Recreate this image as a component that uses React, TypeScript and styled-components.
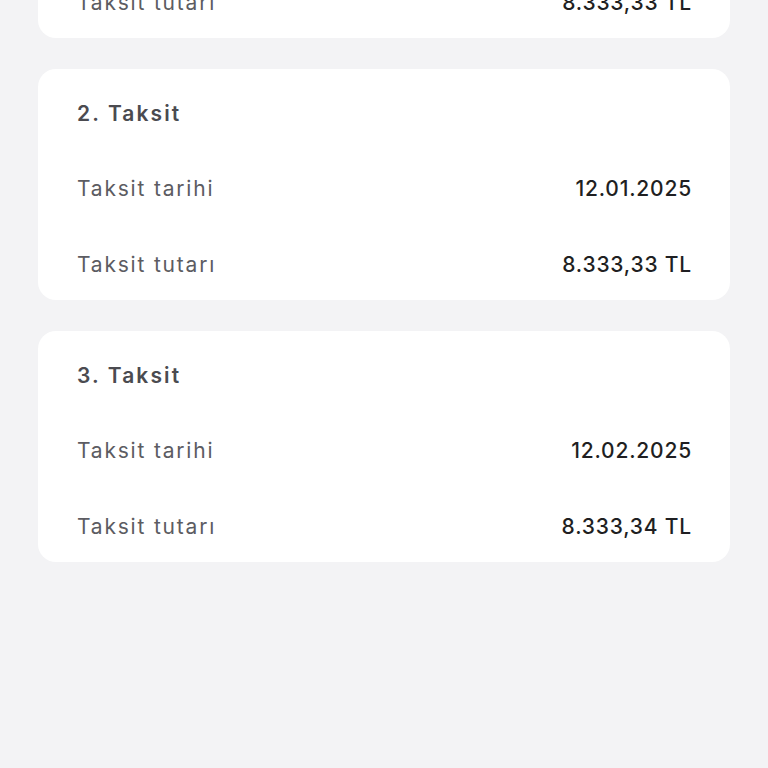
import React from "react";
import styled, { createGlobalStyle } from "styled-components";

const Global = createGlobalStyle`
  html, body { margin: 0; padding: 0; background: #f3f3f5; }
  body { font-family: "Inter", "Noto Sans", sans-serif; -webkit-font-smoothing: antialiased; }
`;

const Page = styled.div`
  width: 768px;
  height: 768px;
  overflow: hidden;
  background: #f3f3f5;
`;

const List = styled.div`
  display: flex;
  flex-direction: column;
  gap: 31px;
  padding: 0 38px;
  margin-top: -193px;
`;

const Card = styled.section`
  background: #ffffff;
  border-radius: 18px;
  height: 231px;
  box-sizing: border-box;
  padding: 7px 39px 0;
  display: grid;
  grid-template-rows: 74px 76px 74px;
  align-items: center;
`;

const Title = styled.div`
  font-size: 21px;
  font-weight: 600;
  letter-spacing: 2.1px;
  color: #4b4b50;
`;

const Row = styled.div`
  height: 76px;
  align-self: start;
  display: flex;
  align-items: center;
  justify-content: space-between;
`;

const Label = styled.span`
  font-size: 21px;
  font-weight: 400;
  letter-spacing: 1.8px;
  color: #5c5c62;
`;

const Value = styled.span`
  font-size: 21px;
  font-weight: 500;
  letter-spacing: 0.8px;
  margin-right: -1px;
  color: #1f1f22;
`;

const data = [
  { n: 1, date: "12.12.2024", amount: "8.333,33 TL" },
  { n: 2, date: "12.01.2025", amount: "8.333,33 TL" },
  { n: 3, date: "12.02.2025", amount: "8.333,34 TL" },
];

export default function App() {
  return (
    <Page>
      <Global />
      <List>
        {data.map((d) => (
          <Card key={d.n}>
            <Title>{d.n}. Taksit</Title>
            <Row>
              <Label>Taksit tarihi</Label>
              <Value>{d.date}</Value>
            </Row>
            <Row>
              <Label>Taksit tutarı</Label>
              <Value>{d.amount}</Value>
            </Row>
          </Card>
        ))}
      </List>
    </Page>
  );
}
